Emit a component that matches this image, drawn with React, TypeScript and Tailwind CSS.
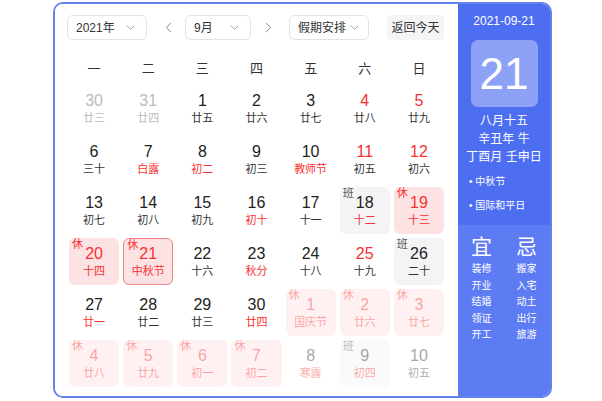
import { ChevronDown, ChevronLeft, ChevronRight } from "lucide-react";

type Day = {
  n: number;
  lunar: string;
  other?: "prev" | "next";
  weekend?: boolean;
  redLunar?: boolean;
  tag?: "休" | "班";
  selected?: boolean;
};

const days: Day[] = [
  { n: 30, lunar: "廿三", other: "prev" },
  { n: 31, lunar: "廿四", other: "prev" },
  { n: 1, lunar: "廿五" },
  { n: 2, lunar: "廿六" },
  { n: 3, lunar: "廿七" },
  { n: 4, lunar: "廿八", weekend: true },
  { n: 5, lunar: "廿九", weekend: true },
  { n: 6, lunar: "三十" },
  { n: 7, lunar: "白露", redLunar: true },
  { n: 8, lunar: "初二", redLunar: true },
  { n: 9, lunar: "初三" },
  { n: 10, lunar: "教师节", redLunar: true },
  { n: 11, lunar: "初五", weekend: true },
  { n: 12, lunar: "初六", weekend: true },
  { n: 13, lunar: "初七" },
  { n: 14, lunar: "初八" },
  { n: 15, lunar: "初九" },
  { n: 16, lunar: "初十", redLunar: true },
  { n: 17, lunar: "十一" },
  { n: 18, lunar: "十二", tag: "班", redLunar: true },
  { n: 19, lunar: "十三", tag: "休", weekend: true },
  { n: 20, lunar: "十四", tag: "休", weekend: true },
  { n: 21, lunar: "中秋节", tag: "休", weekend: true, selected: true },
  { n: 22, lunar: "十六" },
  { n: 23, lunar: "秋分", redLunar: true },
  { n: 24, lunar: "十八" },
  { n: 25, lunar: "十九", weekend: true },
  { n: 26, lunar: "二十", tag: "班" },
  { n: 27, lunar: "廿一", redLunar: true },
  { n: 28, lunar: "廿二" },
  { n: 29, lunar: "廿三" },
  { n: 30, lunar: "廿四", redLunar: true },
  { n: 1, lunar: "国庆节", other: "next", tag: "休", weekend: true, redLunar: true },
  { n: 2, lunar: "廿六", other: "next", tag: "休", weekend: true },
  { n: 3, lunar: "廿七", other: "next", tag: "休", weekend: true },
  { n: 4, lunar: "廿八", other: "next", tag: "休", weekend: true },
  { n: 5, lunar: "廿九", other: "next", tag: "休", weekend: true },
  { n: 6, lunar: "初一", other: "next", tag: "休", weekend: true },
  { n: 7, lunar: "初二", other: "next", tag: "休", weekend: true },
  { n: 8, lunar: "寒露", other: "next", redLunar: true },
  { n: 9, lunar: "初四", other: "next", tag: "班", redLunar: true },
  { n: 10, lunar: "初五", other: "next" },
];

const weekdays = ["一", "二", "三", "四", "五", "六", "日"];
const yi = ["装修", "开业", "结婚", "领证", "开工"];
const ji = ["搬家", "入宅", "动土", "出行", "旅游"];

function Select({ label, width }: { label: string; width: string }) {
  return (
    <div
      className={`flex h-[25px] items-center justify-between rounded-[6px] border border-[#e2e2e2] bg-white pl-[8px] pr-[8px] text-[12px] text-[#333] ${width}`}
    >
      <span>{label}</span>
      <ChevronDown size={15} strokeWidth={1.4} className="text-[#999]" />
    </div>
  );
}

function Cell({ d }: { d: Day }) {
  const isHoliday = d.tag === "休";
  const isWork = d.tag === "班";
  let bg = "";
  if (isHoliday) bg = d.other ? "bg-[#fff1f1]" : "bg-[#fde2e3]";
  else if (isWork) bg = d.other ? "bg-[#fafafa]" : "bg-[#f4f4f5]";
  const border = d.selected ? "border border-[#f08486]" : "";
  const red = isHoliday || d.weekend;
  let numColor = red ? "text-[#f73131]" : "text-[#222]";
  let lunarColor = isHoliday ? "text-[#f73131]" : d.redLunar ? "text-[#f73131]" : "text-[#333]";
  if (d.other === "prev") {
    numColor = "text-[#bbb]";
    lunarColor = "text-[#bbb]";
  }
  const fade = d.other === "next" ? "opacity-40" : "";
  return (
    <div className={`relative flex h-[47px] flex-col items-center justify-center rounded-[6px] ${bg} ${border}`}>
      {d.tag && (
        <span
          className={`absolute left-[3px] top-[1px] text-[11px] leading-none ${fade} ${
            isHoliday ? "text-[#f73131]" : "text-[#555]"
          }`}
        >
          {d.tag}
        </span>
      )}
      <div className={`flex flex-col items-center ${fade}`}>
        <span className={`text-[16px] leading-[18px] ${numColor}`}>{d.n}</span>
        <span className={`mt-[1px] text-[11px] leading-[14px] ${lunarColor}`}>{d.lunar}</span>
      </div>
    </div>
  );
}

export default function App() {
  return (
    <div
      className="h-[401px] w-[602px] bg-white pl-[53px] pt-[2px]"
      style={{ fontFamily: '"Liberation Sans", Arial, "Noto Sans CJK SC", sans-serif' }}
    >
      <div className="flex h-[396px] w-[499px] overflow-hidden rounded-[10px] border-2 border-[#6581ec]">
        <div className="flex-1 bg-white pt-[11px]">
          <div className="flex items-center pl-[12px]">
            <Select label="2021年" width="w-[80px]" />
            <ChevronLeft size={17} strokeWidth={1.4} className="ml-[13px] text-[#888]" />
            <div className="ml-[8px]">
              <Select label="9月" width="w-[66px]" />
            </div>
            <ChevronRight size={17} strokeWidth={1.4} className="ml-[9px] text-[#888]" />
            <div className="ml-[12px]">
              <div className="flex h-[25px] w-[80px] items-center justify-between rounded-[6px] border border-[#e2e2e2] pl-[8px] pr-[6px] text-[12px] text-[#333]">
                <span>假期安排</span>
                <ChevronDown size={15} strokeWidth={1.4} className="text-[#999]" />
              </div>
            </div>
            <div className="ml-[18px] flex h-[25px] w-[57px] items-center justify-center rounded-[4px] bg-[#f5f5f6] text-[12px] text-[#333]">
              返回今天
            </div>
          </div>
          <div className="mt-[17px] grid h-[24px] grid-cols-7 gap-x-[4px] px-[14px] text-[13px] text-[#333]">
            {weekdays.map((w) => (
              <div key={w} className="flex items-center justify-center">
                {w}
              </div>
            ))}
          </div>
          <div className="mt-[4px] grid grid-cols-7 gap-x-[4px] gap-y-[4px] px-[14px]">
            {days.map((d, i) => (
              <Cell key={i} d={d} />
            ))}
          </div>
        </div>
        <div className="flex w-[92px] flex-col text-white">
          <div className="flex h-[221px] flex-col items-center bg-[#4e6ef2] pt-[9px]">
            <div className="text-[12px] leading-[16px]">2021-09-21</div>
            <div className="mt-[11px] flex h-[67px] w-[67px] items-center justify-center rounded-[7px] bg-[#8da2f6]">
              <span className="text-[44px] font-light leading-none">21</span>
            </div>
            <div className="mt-[5px] flex flex-col items-center text-[12px] leading-[18px]">
              <span>八月十五</span>
              <span>辛丑年 牛</span>
              <span>丁酉月 壬申日</span>
            </div>
            <div className="mt-[7px] flex w-full flex-col gap-[7px] pl-[11px] text-[10px] leading-[17px]">
              <span>• 中秋节</span>
              <span>• 国际和平日</span>
            </div>
          </div>
          <div className="flex flex-1 justify-center gap-[24px] bg-[#5d7cf4] pt-[10px]">
            <div className="flex flex-col items-center">
              <span className="text-[21px] leading-[24px]">宜</span>
              <div className="mt-[2px] flex flex-col text-[10px] leading-[16.5px]">
                {yi.map((t) => (
                  <span key={t}>{t}</span>
                ))}
              </div>
            </div>
            <div className="flex flex-col items-center">
              <span className="text-[21px] leading-[24px]">忌</span>
              <div className="mt-[2px] flex flex-col text-[10px] leading-[16.5px]">
                {ji.map((t) => (
                  <span key={t}>{t}</span>
                ))}
              </div>
            </div>
          </div>
        </div>
      </div>
    </div>
  );
}
